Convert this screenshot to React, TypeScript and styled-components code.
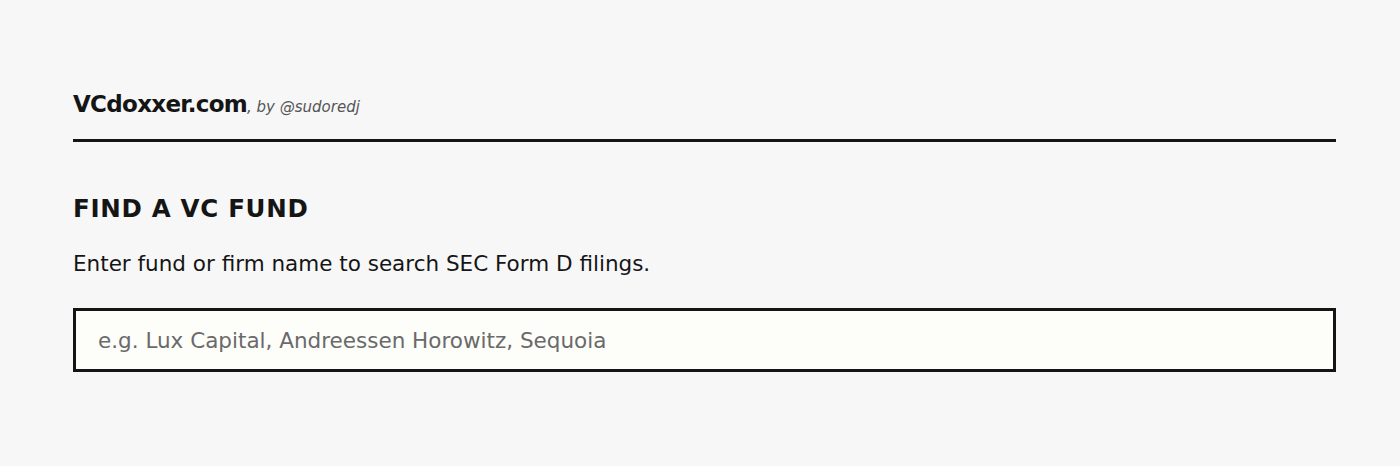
import * as React from 'react';
import styled, { createGlobalStyle } from 'styled-components';

const GlobalStyle = createGlobalStyle`
    html, body {
        margin: 0;
        padding: 0;
        background: #f7f7f8;
    }
    body {
        font-family: "DejaVu Sans", "Noto Sans", sans-serif;
        color: #151515;
    }
`;

const Page = styled.div`
    width: 1263px;
    margin-left: 73px;
    padding-top: 90px;
`;

const Header = styled.header`
    display: flex;
    align-items: baseline;
    line-height: 28px;
    padding-bottom: 18px;
    border-bottom: 3px solid #151515;
`;

const Brand = styled.span`
    font-size: 23px;
    font-weight: bold;
    letter-spacing: -0.7px;
`;

const Byline = styled.span`
    font-size: 15px;
    font-style: italic;
    color: #555;
`;

const Title = styled.h2`
    margin: 52px 0 0;
    font-size: 24.5px;
    line-height: 30px;
    font-weight: bold;
    letter-spacing: 0.7px;
`;

const Lead = styled.p`
    margin: 27px 0 0;
    font-size: 21.5px;
    line-height: 26px;
`;

const SearchInput = styled.input`
    display: block;
    box-sizing: border-box;
    width: 100%;
    height: 64px;
    margin-top: 31px;
    padding: 0 22px;
    border: 3px solid #151515;
    background: #fdfdfa;
    font-family: inherit;
    font-size: 21.5px;
    color: #151515;
    outline: none;
    &::placeholder {
        color: #6a6a6a;
    }
`;

const App: React.FC = () => {
    return (
        <>
            <GlobalStyle />
            <Page>
                <Header>
                    <Brand>VCdoxxer.com</Brand>
                    <Byline>, by @sudoredj</Byline>
                </Header>
                <Title>FIND A VC FUND</Title>
                <Lead>Enter fund or firm name to search SEC Form D filings.</Lead>
                <SearchInput
                    autoFocus
                    type="text"
                    placeholder="e.g. Lux Capital, Andreessen Horowitz, Sequoia"
                />
            </Page>
        </>
    );
};

export default App;
